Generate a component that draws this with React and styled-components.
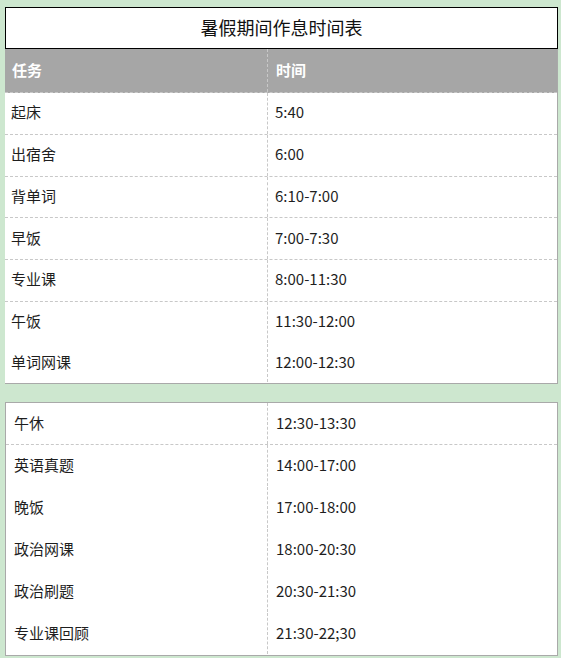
import React from "react";
import styled, { createGlobalStyle } from "styled-components";

const GlobalStyle = createGlobalStyle`
    html, body {
        margin: 0;
        padding: 0;
        background: #cde7cf;
    }
    body {
        font-family: "Noto Sans CJK SC", "Noto Sans", sans-serif;
        color: #1e1e1e;
    }
`;

const Page = styled.div`
    display: flex;
    flex-direction: column;
    gap: 18px;
    padding: 7px 4px 2px 5px;
    width: 553px;
`;

const Card = styled.div`
    background: #fff;
    display: flex;
    flex-direction: column;
    ${props => props.boxed
        ? "border: 1px solid #a9a9a9;"
        : "border-right: 1px solid #a9a9a9; border-bottom: 1px solid #a9a9a9;"}
`;

const Title = styled.div`
    height: 40px;
    border: 1px solid #000;
    display: flex;
    align-items: center;
    justify-content: center;
    padding-bottom: 2px;
    box-sizing: border-box;
    height: 42px;
    font-size: 18px;
    color: #111;
    margin-right: -1px;
`;

const Row = styled.div`
    display: grid;
    grid-template-columns: ${props => props.first}px 1fr;
    height: ${props => props.h}px;
    box-sizing: border-box;
    border-bottom: 1px ${props => (props.dashed ? "dashed #c8c8c8" : "solid transparent")};
    background: ${props => (props.head ? "#a6a6a6" : "transparent")};
    color: ${props => (props.head ? "#fff" : "inherit")};
    font-weight: ${props => (props.head ? 700 : 400)};
    font-size: 15px;
`;

const Cell = styled.div`
    display: flex;
    align-items: center;
    padding-left: ${props => props.pad}px;
    padding-bottom: 3px;
    border-right: ${props => (props.divider ? "1px dashed #c8c8c8" : "none")};
    white-space: nowrap;
`;

const firstRows = [
    ["起床", "5:40", true],
    ["出宿舍", "6:00", true],
    ["背单词", "6:10-7:00", true],
    ["早饭", "7:00-7:30", true],
    ["专业课", "8:00-11:30", true],
    ["午饭", "11:30-12:00", false],
    ["单词网课", "12:00-12:30", false],
];

const secondRows = [
    ["午休", "12:30-13:30", true],
    ["英语真题", "14:00-17:00", false],
    ["晚饭", "17:00-18:00", false],
    ["政治网课", "18:00-20:30", false],
    ["政治刷题", "20:30-21:30", false],
    ["专业课回顾", "21:30-22;30", false],
];

const App = () => {
    return (
        <>
            <GlobalStyle />
            <Page>
                <Card>
                    <Title>暑假期间作息时间表</Title>
                    <Row head dashed first={263} h={44}>
                        <Cell divider pad={7}>任务</Cell>
                        <Cell pad={8}>时间</Cell>
                    </Row>
                    {firstRows.map(([task, time, dashed], i) => (
                        <Row key={i} dashed={dashed} first={263} h={i === 6 ? 39.5 : 41.75}>
                            <Cell divider pad={6}>{task}</Cell>
                            <Cell pad={7}>{time}</Cell>
                        </Row>
                    ))}
                </Card>
                <Card boxed>
                    {secondRows.map(([task, time, dashed], i) => (
                        <Row key={i} dashed={dashed} first={262} h={42}>
                            <Cell divider pad={8}>{task}</Cell>
                            <Cell pad={8}>{time}</Cell>
                        </Row>
                    ))}
                </Card>
            </Page>
        </>
    );
};

export default App;
